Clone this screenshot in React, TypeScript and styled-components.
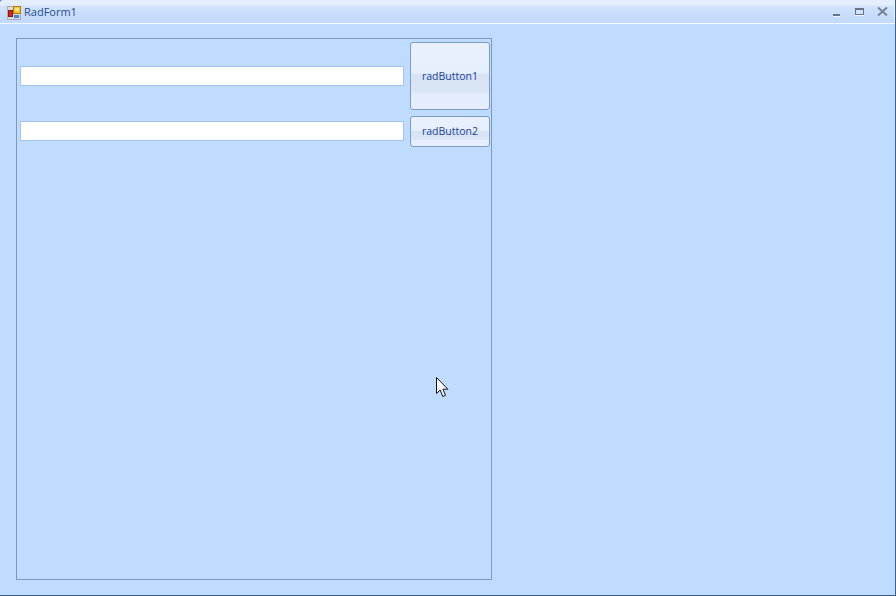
import React from "react";
import styled, { createGlobalStyle } from "styled-components";

const Global = createGlobalStyle`
  html, body { margin: 0; padding: 0; background: #bfdbff; }
  #root { width: 896px; height: 596px; }
`;

const Window = styled.div`
  position: relative;
  box-sizing: border-box;
  width: 896px;
  height: 596px;
  display: flex;
  flex-direction: column;
  background: #5f7ea8;
  border-right: 1px solid #3b5f8f;
  border-bottom: 1px solid #3b5a88;
  overflow: hidden;
  font-family: "Liberation Sans", Arial, sans-serif;
`;

const TitleBar = styled.div`
  box-sizing: border-box;
  height: 24px;
  flex: none;
  display: flex;
  align-items: center;
  padding: 0 6px 0 7px;
  border-top-left-radius: 3px;
  background: linear-gradient(to bottom, #e3edfb 0, #e3edfb 5px, #d2e3fb 6px, #c9defc 14px, #c2dafc 22px);
  border-bottom: 1px solid #f4f8ff;
  border-right: 1px solid #e8f1fe;
`;

const TitleIcon = styled.svg`
  width: 14px;
  height: 14px;
  flex: none;
  margin-top: 2px;
`;

const TitleText = styled.span`
  margin-left: 3px;
  font-family: "Open Sans", "Noto Sans", sans-serif;
  font-size: 11px;
  color: #1f4a8f;
`;

const TitleButtons = styled.div`
  margin-left: auto;
  display: flex;
  align-items: center;
  gap: 12px;
`;

const CaptionIcon = styled.svg`
  width: 11px;
  height: 11px;
  display: block;
`;

const Body = styled.div`
  flex: 1;
  padding: 14px 0 0 16px;
  background: #bfdbff;
`;

const Panel = styled.div`
  box-sizing: border-box;
  width: 476px;
  height: 542px;
  border: 1px solid #7b98bf;
  padding: 3px 1px 0 3px;
  display: flex;
  flex-direction: column;
  gap: 6px;
`;

const Row = styled.div`
  display: flex;
  align-items: flex-start;
  gap: 6px;
`;

const TextBox = styled.div<{ $top: number }>`
  box-sizing: border-box;
  width: 384px;
  height: 20px;
  margin-top: ${(p) => p.$top}px;
  background: #fff;
  border: 1px solid #a4c4ee;
`;

const Button = styled.div<{ $h: number; $split: number; $end: number }>`
  box-sizing: border-box;
  width: 80px;
  height: ${(p) => p.$h}px;
  padding-bottom: 1px;
  border: 1px solid #7e9cc4;
  border-radius: 3px;
  display: flex;
  align-items: center;
  justify-content: center;
  font-family: "Open Sans", "Noto Sans", sans-serif;
  font-size: 10.5px;
  color: #1a3f99;
  background: linear-gradient(
    to bottom,
    #e9f1fd 0,
    #e6effc ${(p) => p.$split - 3}%,
    #d6e3f3 ${(p) => p.$split}%,
    #dbe6f5 ${(p) => p.$end - 4}%,
    #e3edfb ${(p) => p.$end}%,
    #e6effc 100%
  );
`;

const Cursor = styled.svg`
  position: absolute;
  left: 436px;
  top: 377px;
  width: 13px;
  height: 21px;
`;

export default function App() {
  return (
    <>
      <Global />
      <Window>
        <TitleBar>
          <TitleIcon viewBox="0 0 14 14">
            <rect x="0.5" y="0.5" width="13" height="13" fill="#d6d9df" stroke="#a9aeb8" />
            <rect x="6.5" y="0.5" width="7" height="7" fill="#f3c52f" stroke="#b07c12" />
            <rect x="8" y="2" width="4" height="3" fill="#fde477" />
            <rect x="1.5" y="4.5" width="4" height="6" fill="#d8261c" stroke="#8c1a14" />
            <rect x="7" y="9" width="5" height="3" fill="#4a86d8" />
          </TitleIcon>
          <TitleText>RadForm1</TitleText>
          <TitleButtons>
            <CaptionIcon viewBox="0 0 11 11">
              <rect x="2" y="8" width="7" height="2" fill="#66758c" />
              <rect x="2" y="10" width="7" height="1" fill="#eef5ff" />
            </CaptionIcon>
            <CaptionIcon viewBox="0 0 11 11">
              <rect x="1.5" y="2.5" width="8" height="6" fill="#d6e5fb" stroke="#66758c" />
              <rect x="1" y="2" width="9" height="2" fill="#66758c" />
              <rect x="1" y="9" width="9" height="1" fill="#eef5ff" />
            </CaptionIcon>
            <CaptionIcon viewBox="0 0 11 11">
              <path d="M1 1.5 L10 9.5 M10 1.5 L1 9.5" stroke="#747f92" strokeWidth="1.8" fill="none" />
            </CaptionIcon>
          </TitleButtons>
        </TitleBar>
        <Body>
          <Panel>
            <Row>
              <TextBox $top={24} />
              <Button $h={68} $split={48} $end={78}>radButton1</Button>
            </Row>
            <Row>
              <TextBox $top={5} />
              <Button $h={31} $split={50} $end={80}>radButton2</Button>
            </Row>
          </Panel>
        </Body>
        <Cursor viewBox="0 0 13 21">
          <path
            d="M0.5 0.5 V16.5 L4.2 13 L6.8 19.5 L9.5 18.3 L6.9 12.2 H11.8 Z"
            fill="#fff"
            stroke="#111"
            strokeWidth="1"
            strokeLinejoin="miter"
          />
        </Cursor>
      </Window>
    </>
  );
}
